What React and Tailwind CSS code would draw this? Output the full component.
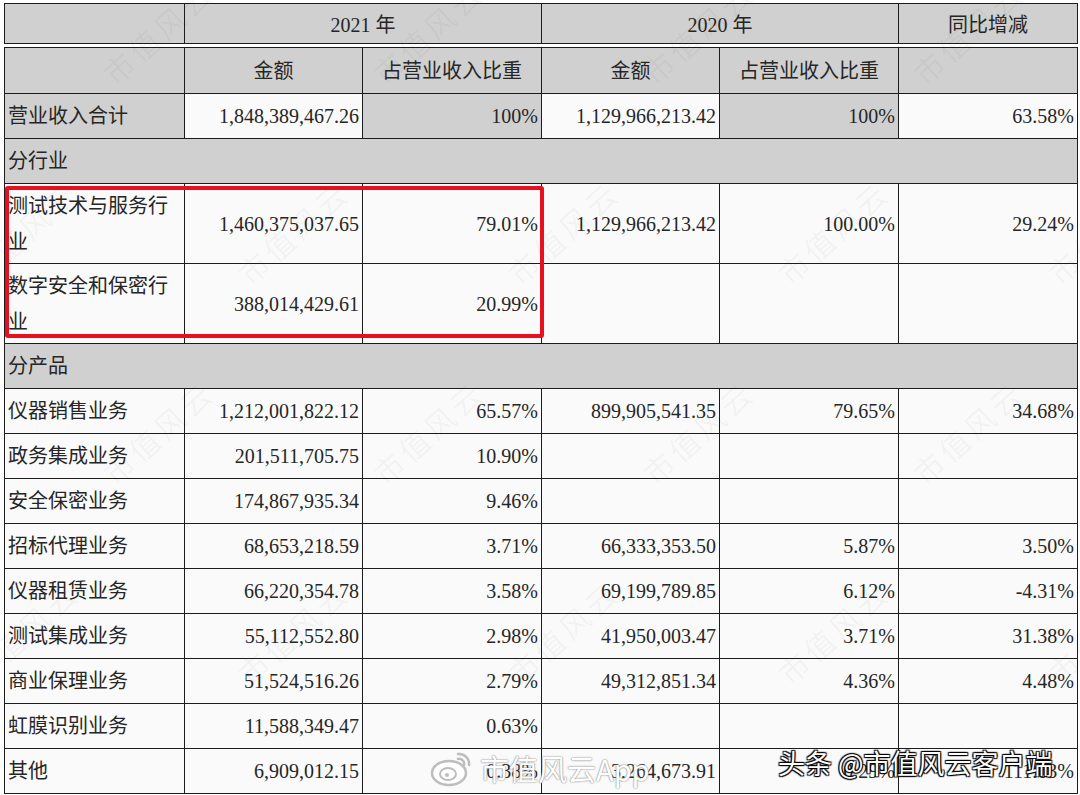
import React from "react";

const cols = [180, 178, 179, 178, 179, 179];

const products = [
  ["仪器销售业务", "1,212,001,822.12", "65.57%", "899,905,541.35", "79.65%", "34.68%"],
  ["政务集成业务", "201,511,705.75", "10.90%", "", "", ""],
  ["安全保密业务", "174,867,935.34", "9.46%", "", "", ""],
  ["招标代理业务", "68,653,218.59", "3.71%", "66,333,353.50", "5.87%", "3.50%"],
  ["仪器租赁业务", "66,220,354.78", "3.58%", "69,199,789.85", "6.12%", "-4.31%"],
  ["测试集成业务", "55,112,552.80", "2.98%", "41,950,003.47", "3.71%", "31.38%"],
  ["商业保理业务", "51,524,516.26", "2.79%", "49,312,851.34", "4.36%", "4.48%"],
  ["虹膜识别业务", "11,588,349.47", "0.63%", "", "", ""],
  ["其他", "6,909,012.15", "0.38%", "3,264,673.91", "0.29%", "111.63%"],
];

const industries = [
  ["测试技术与服务行业", "1,460,375,037.65", "79.01%", "1,129,966,213.42", "100.00%", "29.24%"],
  ["数字安全和保密行业", "388,014,429.61", "20.99%", "", "", ""],
];

const td = "border border-[#1c1c1c] p-0";

function ColGroup() {
  return (
    <colgroup>
      {cols.map((w, i) => (
        <col key={i} style={{ width: w }} />
      ))}
    </colgroup>
  );
}

function DataRow({ r, h, wrapLabel }) {
  return (
    <tr>
      <td className={`${td} bg-[#fafafa] pl-[3px] pr-[10px] text-left align-middle`} style={{ height: h }}>
        <div className={wrapLabel ? "leading-[36px] overflow-hidden" : "leading-[24px] whitespace-nowrap"}>{r[0]}</div>
      </td>
      {r.slice(1).map((c, i) => (
        <td key={i} className={`${td} bg-[#fafafa] pr-[3px] text-right align-middle whitespace-nowrap`}>
          {c}
        </td>
      ))}
    </tr>
  );
}

function Watermarks() {
  const pts = [];
  const ys = [10, 210, 410, 610];
  ys.forEach((y, ri) => {
    for (let k = 0; k < 5; k++) {
      const x = 150 + k * 270 + (ri % 2 === 0 ? 0 : -135) - 60;
      pts.push([x, y]);
    }
  });
  return (
    <div className="pointer-events-none absolute inset-0 overflow-hidden">
      {pts.map(([x, y], i) => (
        <div
          key={i}
          className="absolute text-[30px] text-[rgba(0,0,0,0.04)] font-['Noto_Sans_CJK_SC',sans-serif] whitespace-nowrap -rotate-[42deg] tracking-[4px]"
          style={{ left: x, top: y }}
        >
          市值风云
        </div>
      ))}
    </div>
  );
}

export default function App() {
  return (
    <div className="relative w-[1080px] h-[795px] overflow-hidden bg-white text-[20px] text-[#262626] font-['Liberation_Serif','Noto_Sans_CJK_SC',serif]">
      <div className="pl-[4px] pt-[3px]">
        <table className="border-collapse table-fixed w-[1073px]">
          <ColGroup />
          <tbody>
            <tr>
              <td className={`${td} bg-[#d0d0d0] h-[40px]`}></td>
              <td colSpan={2} className={`${td} bg-[#d0d0d0] text-center pt-[2px]`}>2021 年</td>
              <td colSpan={2} className={`${td} bg-[#d0d0d0] text-center pt-[2px]`}>2020 年</td>
              <td className={`${td} bg-[#d0d0d0] text-center pt-[2px]`}>同比增减</td>
            </tr>
          </tbody>
        </table>
        <table className="mt-[3px] border-collapse table-fixed w-[1073px]">
          <ColGroup />
          <tbody>
            <tr>
              <td className={`${td} bg-[#d0d0d0] h-[46px]`}></td>
              <td className={`${td} bg-[#d0d0d0] text-center`}>金额</td>
              <td className={`${td} bg-[#d0d0d0] text-center`}>占营业收入比重</td>
              <td className={`${td} bg-[#d0d0d0] text-center`}>金额</td>
              <td className={`${td} bg-[#d0d0d0] text-center`}>占营业收入比重</td>
              <td className={`${td} bg-[#d0d0d0]`}></td>
            </tr>
            <tr>
              <td className={`${td} bg-[#d0d0d0] h-[45px] pl-[3px] whitespace-nowrap`}>营业收入合计</td>
              <td className={`${td} bg-[#fafafa] pr-[3px] text-right`}>1,848,389,467.26</td>
              <td className={`${td} bg-[#d0d0d0] pr-[3px] text-right`}>100%</td>
              <td className={`${td} bg-[#fafafa] pr-[3px] text-right`}>1,129,966,213.42</td>
              <td className={`${td} bg-[#d0d0d0] pr-[3px] text-right`}>100%</td>
              <td className={`${td} bg-[#fafafa] pr-[3px] text-right`}>63.58%</td>
            </tr>
            <tr>
              <td colSpan={6} className={`${td} bg-[#d0d0d0] h-[45px] pl-[3px] text-left`}>分行业</td>
            </tr>
            {industries.map((r, i) => (
              <DataRow key={i} r={r} h={80} wrapLabel />
            ))}
            <tr>
              <td colSpan={6} className={`${td} bg-[#d0d0d0] h-[45px] pl-[3px] text-left`}>分产品</td>
            </tr>
            {products.map((r, i) => (
              <DataRow key={i} r={r} h={45} />
            ))}
          </tbody>
        </table>
      </div>

      <Watermarks />

      {/* red highlight box */}
      <div className="pointer-events-none absolute left-[5px] top-[186px] w-[539px] h-[152px] border-[4px] border-[#e8101e] rounded-[3px]" />

      {/* weibo watermark */}
      <div className="pointer-events-none absolute left-[430px] top-[748px] flex items-center gap-[6px]">
        <svg width="44" height="40" viewBox="0 0 44 40" fill="none">
          <ellipse cx="19" cy="25" rx="17" ry="12" stroke="#bdbdbd" strokeWidth="2.5" fill="rgba(255,255,255,0.7)" />
          <ellipse cx="18" cy="26" rx="8" ry="6" stroke="#bdbdbd" strokeWidth="2" />
          <circle cx="17" cy="27" r="2" fill="#bdbdbd" />
          <path d="M28 6 A10 10 0 0 1 39 17" stroke="#bdbdbd" strokeWidth="2.5" strokeLinecap="round" />
          <path d="M28 11 A5 5 0 0 1 34 17" stroke="#bdbdbd" strokeWidth="2.5" strokeLinecap="round" />
        </svg>
        <span className="text-[29px] leading-none text-white font-['Noto_Sans_CJK_SC',sans-serif] [text-shadow:0_0_2px_#8a8a8a,0_0_1px_#8a8a8a]">
          市值风云App
        </span>
      </div>

      {/* toutiao watermark */}
      <div className="pointer-events-none absolute left-[778px] top-[749px] text-[27px] leading-none text-white font-['Noto_Sans_CJK_SC',sans-serif] whitespace-nowrap [text-shadow:1px_1px_1px_#000,-1px_-1px_1px_#000,1px_-1px_1px_#000,-1px_1px_1px_#000]">
        头条 @市值风云客户端
      </div>
    </div>
  );
}
